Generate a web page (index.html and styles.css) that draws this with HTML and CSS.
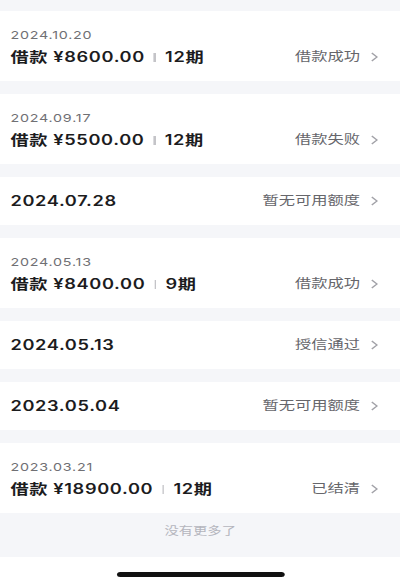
FILE: index.html
```html
<!DOCTYPE html>
<html lang="zh-CN">

<head>
    <meta charset="UTF-8">
    <meta name="viewport" content="width=device-width, initial-scale=1.0">
    <title>借款记录</title>
    <link rel="stylesheet" href="styles.css">
</head>

<body>
    <div class="screen">
        <ul class="record-list">
            <li class="record">
                <div class="record-info">
                    <div class="record-date">2024.10.20</div>
                    <div class="record-title">借款 ¥8600.00<span class="divider"></span>12期</div>
                </div>
                <div class="record-status">借款成功<svg class="arrow" viewBox="0 0 6 10"><polyline points="1,1 5,5 1,9" /></svg></div>
            </li>
            <li class="record">
                <div class="record-info">
                    <div class="record-date">2024.09.17</div>
                    <div class="record-title">借款 ¥5500.00<span class="divider"></span>12期</div>
                </div>
                <div class="record-status">借款失败<svg class="arrow" viewBox="0 0 6 10"><polyline points="1,1 5,5 1,9" /></svg></div>
            </li>
            <li class="record record-single">
                <div class="record-title">2024.07.28</div>
                <div class="record-status">暂无可用额度<svg class="arrow" viewBox="0 0 6 10"><polyline points="1,1 5,5 1,9" /></svg></div>
            </li>
            <li class="record">
                <div class="record-info">
                    <div class="record-date">2024.05.13</div>
                    <div class="record-title">借款 ¥8400.00<span class="divider"></span>9期</div>
                </div>
                <div class="record-status">借款成功<svg class="arrow" viewBox="0 0 6 10"><polyline points="1,1 5,5 1,9" /></svg></div>
            </li>
            <li class="record record-single">
                <div class="record-title">2024.05.13</div>
                <div class="record-status">授信通过<svg class="arrow" viewBox="0 0 6 10"><polyline points="1,1 5,5 1,9" /></svg></div>
            </li>
            <li class="record record-single">
                <div class="record-title">2023.05.04</div>
                <div class="record-status">暂无可用额度<svg class="arrow" viewBox="0 0 6 10"><polyline points="1,1 5,5 1,9" /></svg></div>
            </li>
            <li class="record">
                <div class="record-info">
                    <div class="record-date">2023.03.21</div>
                    <div class="record-title">借款 ¥18900.00<span class="divider"></span>12期</div>
                </div>
                <div class="record-status">已结清<svg class="arrow" viewBox="0 0 6 10"><polyline points="1,1 5,5 1,9" /></svg></div>
            </li>
        </ul>
        <p class="list-end">没有更多了</p>
        <div class="home-indicator">
            <div class="home-bar"></div>
        </div>
    </div>
</body>

</html>
```

FILE: styles.css
```css
html,
body {
    margin: 0;
    padding: 0;
    overflow: hidden;
    background: #f5f6f9;
}

/* the capture is stretched sideways, so the whole screen is too */
.screen {
    width: 308px;
    transform: scaleX(1.3);
    transform-origin: 0 0;
    font-family: Inter, "Noto Sans CJK SC", sans-serif;
    background: #f5f6f9;
}

.record-list {
    list-style: none;
    margin: 0;
    padding: 11px 0 0;
}

.record {
    display: flex;
    justify-content: space-between;
    align-items: flex-end;
    background: #fff;
    padding: 16px 17px 14px 8px;
    margin-bottom: 13px;
}

.record:last-child {
    margin-bottom: 0;
}

.record-single {
    align-items: center;
    padding: 14px 17px 14px 8px;
}

.record-date {
    font-size: 11px;
    line-height: 16px;
    letter-spacing: 0.6px;
    color: #707074;
    margin-bottom: 4px;
}

.record-title {
    font-size: 14px;
    line-height: 20px;
    font-weight: 600;
    letter-spacing: 0.5px;
    color: #1c1c1e;
    white-space: nowrap;
}

.divider {
    display: inline-block;
    width: 1.5px;
    height: 9px;
    margin: 0 7px;
    background: #c4c4c8;
    vertical-align: 0;
}

.record-status {
    display: flex;
    align-items: center;
    font-size: 12.5px;
    line-height: 20px;
    color: #66666b;
    white-space: nowrap;
}

.arrow {
    width: 6px;
    height: 10px;
    margin-left: 8px;
}

.arrow polyline {
    fill: none;
    stroke: #a2a2a8;
    stroke-width: 1.1;
}

.list-end {
    margin: 0;
    padding: 10px 0 18px;
    text-align: center;
    font-size: 11px;
    line-height: 16px;
    color: #b4b5bd;
}

.home-indicator {
    height: 25px;
    box-sizing: border-box;
    padding-top: 15px;
    background: #fff;
    display: flex;
    justify-content: center;
}

.home-bar {
    width: 129px;
    height: 5px;
    border-radius: 3px;
    background: #111;
}
```
